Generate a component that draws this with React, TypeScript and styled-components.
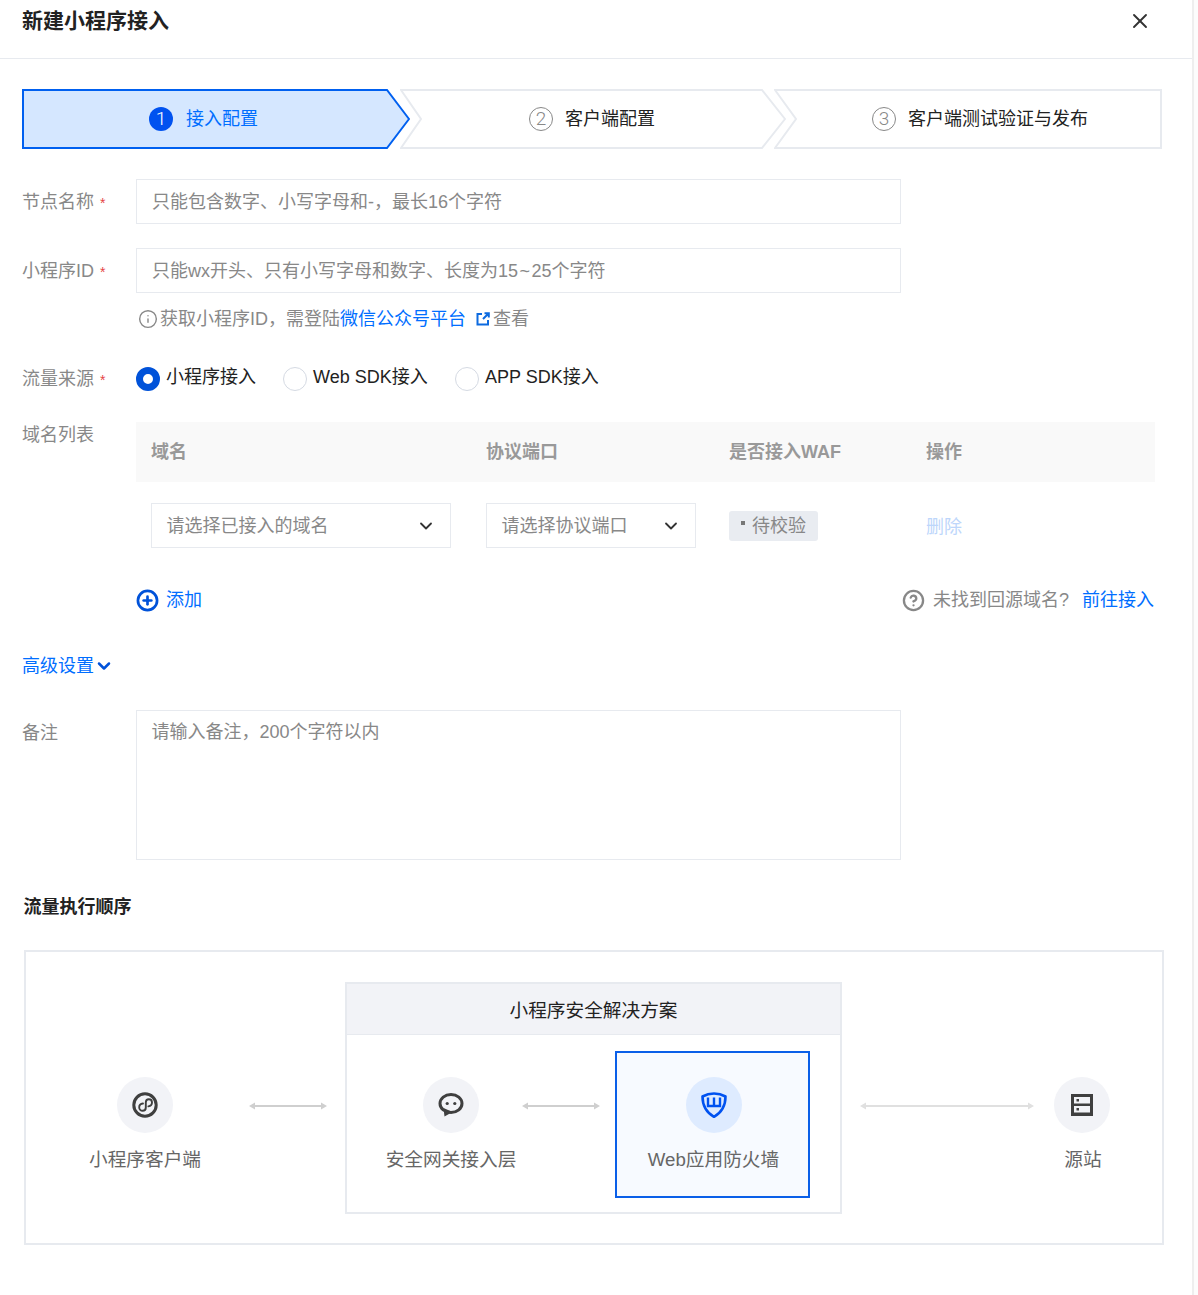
import React from "react";
import styled, { createGlobalStyle } from "styled-components";
import { X, ChevronDown, Info, CirclePlus, CircleHelp } from "lucide-react";

const Global = createGlobalStyle`
  html, body { margin: 0; padding: 0; background: #fcfcfc; }
  body { font-family: "Liberation Sans", "Noto Sans CJK SC", sans-serif; font-size: 18px; line-height: 24px; color: #222; }
  * { box-sizing: border-box; }
`;

const BLUE = "#006eff";
const BORDER = "#e7eaef";

const Page = styled.div`
  width: 1194px;
  height: 1295px;
  background: #fff;
  border-right: 2px solid #eeeeee;
  overflow: hidden;
`;
const Header = styled.header`
  height: 59px;
  padding: 0 40px 0 22px;
  display: flex;
  justify-content: space-between;
  border-bottom: 1px solid ${BORDER};
`;
const Title = styled.h1`
  margin: 0;
  font-size: 21px;
  line-height: 41px;
  font-weight: 700;
  color: #222;
`;
const CloseButton = styled.button`
  border: 0;
  background: none;
  padding: 0;
  width: 24px;
  height: 42px;
  color: #333;
  display: flex;
  align-items: center;
  justify-content: center;
`;
const Main = styled.main`
  padding: 30px 0 0 22px;
`;
const Steps = styled.div`
  display: flex;
  height: 60px;
  width: 1140px;
`;
const StepItem = styled.div<{ $w: number; $ml: number; $pl: number; $pr: number; $gap: number; $active?: boolean }>`
  position: relative;
  width: ${(p) => p.$w}px;
  margin-left: ${(p) => p.$ml}px;
  padding: 0 ${(p) => p.$pr}px 0 ${(p) => p.$pl}px;
  display: flex;
  align-items: center;
  justify-content: center;
  gap: ${(p) => p.$gap}px;
  color: ${(p) => (p.$active ? BLUE : "#222")};
`;
const StepShape = styled.svg`
  position: absolute;
  left: 0;
  top: 0;
  width: 100%;
  height: 100%;
`;
const StepNum = styled.span<{ $active?: boolean }>`
  position: relative;
  width: 24px;
  height: 24px;
  border-radius: 50%;
  display: flex;
  align-items: center;
  justify-content: center;
  font-family: Roboto, sans-serif;
  font-weight: 300;
  font-size: 19px;
  background: ${(p) => (p.$active ? "#0052f0" : "transparent")};
  color: ${(p) => (p.$active ? "#fff" : "#888")};
  border: ${(p) => (p.$active ? "0" : "1.5px solid #888")};
`;
const StepLabel = styled.span`
  position: relative;
`;
const Row = styled.div<{ $mt: number }>`
  display: grid;
  grid-template-columns: 114px 1fr;
  margin-top: ${(p) => p.$mt}px;
`;
const Label = styled.label<{ $lh?: number; $mb?: number }>`
  color: #888;
  line-height: ${(p) => p.$lh ?? 26}px;
  margin-bottom: ${(p) => p.$mb ?? 0}px;
  white-space: nowrap;
`;
const Star = styled.span`
  color: #e54545;
  font-size: 14px;
  line-height: 1;
  margin-left: 6px;
`;
const Input = styled.div`
  width: 765px;
  height: 45px;
  border: 1px solid ${BORDER};
  padding: 0 15px;
  line-height: 45px;
  color: #888;
  white-space: nowrap;
`;
const Tilde = styled.span`
  margin: 0 1.5px;
`;
const Hint = styled.div`
  margin: 14px 0 0 114px;
  display: flex;
  align-items: center;
  color: #888;
  padding-left: 2px;
  white-space: nowrap;
`;
const HintIcon = styled(Info)`
  margin-right: 2px;
`;
const Link = styled.a`
  color: ${BLUE};
  text-decoration: none;
  white-space: nowrap;
`;
const ExternalIcon = styled.svg`
  margin: 0 3px 0 10px;
`;
const Radios = styled.div`
  display: flex;
  align-items: flex-start;
  margin-top: -1px;
`;
const RadioItem = styled.div<{ $w: number }>`
  display: flex;
  align-items: flex-start;
  width: ${(p) => p.$w}px;
  gap: 6px;
  color: #222;
  white-space: nowrap;
`;
const RadioDot = styled.span<{ $on?: boolean }>`
  width: 24px;
  height: 24px;
  border-radius: 50%;
  flex: none;
  margin-top: 2px;
  background: #fff;
  border: ${(p) => (p.$on ? "7px solid #0052d9" : "1px solid #d5dae3")};
`;
const TableHead = styled.div`
  width: 1019px;
  height: 60px;
  background: #f9f9f9;
  padding-left: 15px;
  display: grid;
  grid-template-columns: 335px 243px 197px 1fr;
  align-items: center;
  font-weight: 700;
  color: #999;
`;
const TableRow = styled.div`
  width: 1019px;
  padding: 21px 0 0 15px;
  display: grid;
  grid-template-columns: 335px 243px 197px 1fr;
  align-items: center;
`;
const Select = styled.div<{ $w: number }>`
  width: ${(p) => p.$w}px;
  height: 45px;
  border: 1px solid ${BORDER};
  padding: 0 14px 0 14.5px;
  display: flex;
  align-items: center;
  justify-content: space-between;
  color: #888;
  white-space: nowrap;
`;
const Tag = styled.span`
  width: 89px;
  height: 30px;
  border-radius: 3px;
  background: #e9ecf1;
  color: #888;
  display: flex;
  align-items: center;
  padding-left: 12px;
  gap: 7px;
`;
const TagDot = styled.i`
  width: 4px;
  height: 4px;
  background: #777;
  margin-top: -5px;
`;
const Disabled = styled.span`
  color: #bdd6fb;
  margin-top: 3px;
`;
const AddRow = styled.div`
  width: 1018px;
  margin: 40px 0 0 114px;
  display: flex;
  justify-content: space-between;
  align-items: center;
`;
const AddLink = styled(Link)`
  display: flex;
  align-items: center;
  gap: 7px;
`;
const AddIcon = styled(CirclePlus)`
  color: #0052d9;
`;
const Tip = styled.div`
  display: flex;
  align-items: center;
  color: #888;
  white-space: nowrap;
`;
const TipIcon = styled(CircleHelp)`
  margin-right: 8px;
`;
const TipText = styled.span`
  margin-right: 13px;
`;
const Advanced = styled(Link)`
  display: flex;
  align-items: center;
  margin-top: 42px;
`;
const Textarea = styled.div`
  width: 765px;
  height: 150px;
  border: 1px solid ${BORDER};
  padding: 9px 14.5px;
  color: #888;
`;
const SectionTitle = styled.h2`
  margin: 35px 0 0 1.5px;
  font-size: 18px;
  line-height: 24px;
  font-weight: 700;
  color: #222;
`;
const Diagram = styled.div`
  margin: 31px 0 0 2px;
  width: 1140px;
  height: 295px;
  border: 2px solid ${BORDER};
  padding-top: 30px;
  display: flex;
  align-items: flex-start;
`;
const Node = styled.div<{ $w: number; $ml: number; $mt: number }>`
  width: ${(p) => p.$w}px;
  margin: ${(p) => p.$mt}px 0 0 ${(p) => p.$ml}px;
  display: flex;
  flex-direction: column;
  align-items: center;
  flex: none;
`;
const NodeCircle = styled.div<{ $active?: boolean }>`
  width: 56px;
  height: 56px;
  margin-left: ${(p) => (p.$active ? 3 : 0)}px;
  border-radius: 50%;
  background: ${(p) => (p.$active ? "#deebff" : "#f2f3f7")};
  display: flex;
  align-items: center;
  justify-content: center;
`;
const NodeLabel = styled.div<{ $pl?: number }>`
  margin-top: 15px;
  padding-left: ${(p) => p.$pl ?? 0}px;
  color: #666;
  font-size: 18.67px;
  white-space: nowrap;
`;
const ArrowSvg = styled.svg<{ $ml: number; $mt: number }>`
  flex: none;
  margin: ${(p) => p.$mt}px 0 0 ${(p) => p.$ml}px;
`;
const Panel = styled.div`
  margin-left: 18px;
  width: 497px;
  height: 232px;
  border: 2px solid ${BORDER};
  flex: none;
`;
const PanelHead = styled.div`
  height: 51px;
  background: #f2f3f7;
  border-bottom: 1px solid ${BORDER};
  text-align: center;
  line-height: 54px;
  font-size: 18.67px;
  color: #222;
`;
const PanelBody = styled.div`
  display: flex;
  align-items: flex-start;
  padding-top: 16px;
`;
const WafBox = styled.div`
  margin-left: 15px;
  width: 195px;
  height: 147px;
  border: 2px solid #0a5fe8;
  background: #f7faff;
  flex: none;
  padding-top: 24px;
  display: flex;
  justify-content: center;
`;

const Arrow = ({ w, ml, mt, color = "#cfcfcf" }: { w: number; ml: number; mt: number; color?: string }) => (
  <ArrowSvg $ml={ml} $mt={mt} width={w} height={10} viewBox={`0 0 ${w} 10`}>
    <rect x="4" y="4" width={w - 8} height="2" fill={color} />
    <path d={`M0 5 L6 1.5 V8.5 Z M${w} 5 L${w - 6} 1.5 V8.5 Z`} fill={color} />
  </ArrowSvg>
);

const MiniIcon = () => (
  <svg width="26" height="26" viewBox="0 0 26 26" fill="none" stroke="#3f3f3f">
    <circle cx="13" cy="13" r="11.2" strokeWidth="3" />
    <path
      d="M11 11.5 C8.4 11.8 7.2 13.4 7.2 15.2 C7.2 17.3 8.8 18.8 10.6 18.8 C12.5 18.8 13.8 17.3 13.8 15.4 V10.6 C13.8 8.7 15.1 7.2 16.9 7.2 C18.8 7.2 20 8.8 20 10.6 C20 12.6 18.7 14.1 16.4 14.4"
      strokeWidth="1.9"
      strokeLinecap="round"
    />
  </svg>
);
const ChatIcon = () => (
  <svg width="26" height="26" viewBox="0 0 26 26">
    <ellipse cx="13" cy="11.5" rx="11" ry="9" fill="none" stroke="#3f3f3f" strokeWidth="3" />
    <path d="M5.5 16 L6.5 24.5 L14.5 20 Z" fill="#3f3f3f" />
    <circle cx="9.2" cy="11.5" r="1.6" fill="#3f3f3f" />
    <circle cx="16.8" cy="11.5" r="1.6" fill="#3f3f3f" />
  </svg>
);
const ShieldIcon = () => (
  <svg width="26" height="26" viewBox="0 0 26 26" fill="none" stroke="#0052f0">
    <path d="M13 1.500 C17 1.500 21 2.500 24.500 4.500 C24.500 13 20.500 20.500 13 24.800 C5.500 20.500 1.500 13 1.500 4.500 C5 2.500 9 1.500 13 1.500 Z" strokeWidth="2.6" strokeLinejoin="round" />
    <path d="M7 5.500 V14 H19 V5.500 M13 5.500 V14" strokeWidth="2.400" />
  </svg>
);
const ServerIcon = () => (
  <svg width="22" height="22" viewBox="0 0 22 22">
    <rect width="22" height="22" fill="#3f3f3f" />
    <rect x="3" y="3" width="16" height="6.500" fill="#f2f3f7" />
    <rect x="3" y="12" width="16" height="6.500" fill="#f2f3f7" />
    <rect x="5.500" y="5" width="2.500" height="2.500" fill="#3f3f3f" />
    <rect x="5.500" y="14" width="2.500" height="2.500" fill="#3f3f3f" />
  </svg>
);

export default function App() {
  return (
    <Page>
      <Global />
      <Header>
        <Title>新建小程序接入</Title>
        <CloseButton aria-label="关闭">
          <X size={24} strokeWidth={1.9} />
        </CloseButton>
      </Header>
      <Main>
        <Steps>
          <StepItem $w={388} $ml={0} $pl={0} $pr={25} $gap={13} $active>
            <StepShape viewBox="0 0 388 60" fill="none">
              <path d="M1 1 H365 L387 30 L365 59 H1 Z" fill="#d5e7ff" stroke="#0060f0" strokeWidth="2" />
            </StepShape>
            <StepNum $active>1</StepNum>
            <StepLabel>接入配置</StepLabel>
          </StepItem>
          <StepItem $w={386} $ml={-10} $pl={0} $pr={2} $gap={12}>
            <StepShape viewBox="0 0 386 60" fill="none">
              <path d="M1 1 H362 L385 30 L362 59 H1 L21 30 Z" fill="#fff" stroke={BORDER} strokeWidth="2" />
            </StepShape>
            <StepNum>2</StepNum>
            <StepLabel>客户端配置</StepLabel>
          </StepItem>
          <StepItem $w={388} $ml={-12} $pl={24} $pr={0} $gap={12}>
            <StepShape viewBox="0 0 388 60" fill="none">
              <path d="M1 1 H387 V59 H1 L22 30 Z" fill="#fff" stroke={BORDER} strokeWidth="2" />
            </StepShape>
            <StepNum>3</StepNum>
            <StepLabel>客户端测试验证与发布</StepLabel>
          </StepItem>
        </Steps>

        <Row $mt={30}>
          <Label $lh={47} $mb={-2}>节点名称<Star>*</Star></Label>
          <Input>只能包含数字、小写字母和-，最长16个字符</Input>
        </Row>
        <Row $mt={24}>
          <Label $lh={47} $mb={-2}>小程序ID<Star>*</Star></Label>
          <Input>只能wx开头、只有小写字母和数字、长度为15<Tilde>~</Tilde>25个字符</Input>
        </Row>
        <Hint>
          <HintIcon size={20} strokeWidth={1.7} />
          获取小程序ID，需登陆<Link>微信公众号平台</Link>
          <ExternalIcon width="14" height="14" viewBox="0 0 14 14" fill="none" stroke="#0d6be0" strokeWidth="2">
            <path d="M6 2 H1.500 V12.500 H12 V8 M7 7 L12.500 1.500 M8.500 1.200 H12.800 V5.500" />
          </ExternalIcon>
          查看
        </Hint>
        <Row $mt={35}>
          <Label>流量来源<Star>*</Star></Label>
          <Radios>
            <RadioItem $w={147}><RadioDot $on />小程序接入</RadioItem>
            <RadioItem $w={172}><RadioDot />Web SDK接入</RadioItem>
            <RadioItem $w={160}><RadioDot />APP SDK接入</RadioItem>
          </Radios>
        </Row>
        <Row $mt={30}>
          <Label>域名列表</Label>
          <div>
            <TableHead>
              <span>域名</span>
              <span>协议端口</span>
              <span>是否接入WAF</span>
              <span>操作</span>
            </TableHead>
            <TableRow>
              <Select $w={300}>请选择已接入的域名<ChevronDown size={20} color="#333" strokeWidth={2.2} /></Select>
              <Select $w={210}>请选择协议端口<ChevronDown size={20} color="#333" strokeWidth={2.2} /></Select>
              <Tag><TagDot />待校验</Tag>
              <Disabled>删除</Disabled>
            </TableRow>
          </div>
        </Row>
        <AddRow>
          <AddLink>
            <AddIcon size={23} strokeWidth={2.8} />
            添加
          </AddLink>
          <Tip>
            <TipIcon size={23} strokeWidth={2.4} />
            <TipText>未找到回源域名?</TipText>
            <Link>前往接入</Link>
          </Tip>
        </AddRow>
        <Advanced>
          高级设置
          <ChevronDown size={20} strokeWidth={3} color="#0052d9" />
        </Advanced>
        <Row $mt={32}>
          <Label $lh={46}>备注</Label>
          <Textarea>请输入备注，200个字符以内</Textarea>
        </Row>
        <SectionTitle>流量执行顺序</SectionTitle>
        <Diagram>
          <Node $w={112} $ml={63} $mt={95}>
            <NodeCircle><MiniIcon /></NodeCircle>
            <NodeLabel>小程序客户端</NodeLabel>
          </Node>
          <Arrow w={78} ml={48} mt={119} />
          <Panel>
            <PanelHead>小程序安全解决方案</PanelHead>
            <PanelBody>
              <Node $w={130} $ml={39} $mt={26}>
                <NodeCircle><ChatIcon /></NodeCircle>
                <NodeLabel>安全网关接入层</NodeLabel>
              </Node>
              <Arrow w={78} ml={6} mt={50} />
              <WafBox>
                <Node $w={140} $ml={0} $mt={0}>
                  <NodeCircle $active><ShieldIcon /></NodeCircle>
                  <NodeLabel $pl={2}>Web应用防火墙</NodeLabel>
                </Node>
              </WafBox>
            </PanelBody>
          </Panel>
          <Arrow w={174} ml={18} mt={119} color="#e0e0e0" />
          <Node $w={76} $ml={10} $mt={95}>
            <NodeCircle><ServerIcon /></NodeCircle>
            <NodeLabel $pl={2}>源站</NodeLabel>
          </Node>
        </Diagram>
      </Main>
    </Page>
  );
}
